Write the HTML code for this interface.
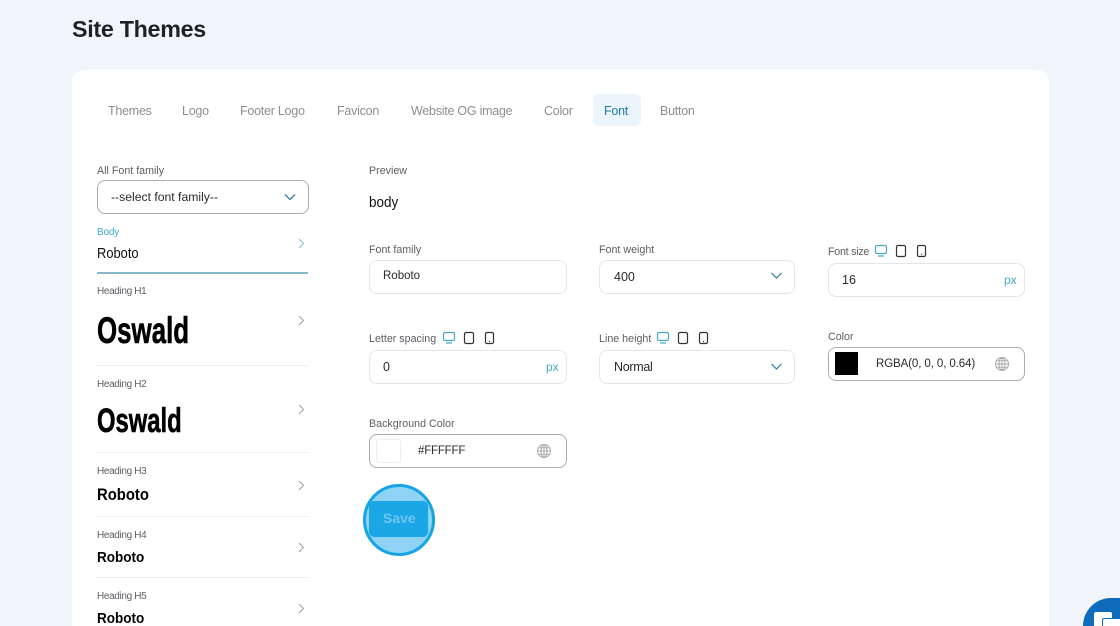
<!DOCTYPE html>
<html><head><meta charset="utf-8">
<style>
html,body{margin:0;padding:0;width:1120px;height:626px;overflow:hidden}
body{background:#f2f6fa;font-family:"Liberation Sans",sans-serif;color:#222}
#root{position:relative;width:1120px;height:626px;overflow:hidden;contain:paint}
.t{position:absolute;white-space:nowrap;line-height:1}
.card{position:absolute;left:72px;top:70px;width:977px;height:556px;background:#fff;border-radius:12px 12px 0 0}
.tab{font-size:12.5px;letter-spacing:-.25px;color:#8b8f93;top:105px}
.lab{font-size:10.7px;color:#5c6064}
.hd{font-size:10px;letter-spacing:-.35px;color:#5c6064}
.box{position:absolute;box-sizing:border-box;background:#fff;border:1px solid #e3e6e9;border-radius:8px}
.dark{border:1px solid #a9acaf}
.val{font-size:12.5px;color:#2a2a2a}
.line{position:absolute;left:97px;width:211px;height:1px;background:#ececec}
.r{font-weight:700;color:#000;transform-origin:0 0;transform:scaleX(.9)}
.osw{font-family:"Liberation Sans Narrow","Liberation Sans",sans-serif;font-weight:700;color:#000;transform-origin:0 0;-webkit-text-stroke:.6px #000}
svg{position:absolute;overflow:visible}
</style></head><body><div id="root">
<div class="t" style="left:72px;top:18px;font-size:23.3px;font-weight:700;color:#1d2226;letter-spacing:-.3px">Site Themes</div>
<div class="card"></div>

<div style="position:absolute;left:593px;top:94px;width:48px;height:32px;background:#ecf5fb;border-radius:6px"></div>
<div class="t tab" style="left:108px">Themes</div>
<div class="t tab" style="left:182px">Logo</div>
<div class="t tab" style="left:240px">Footer Logo</div>
<div class="t tab" style="left:337px">Favicon</div>
<div class="t tab" style="left:411px">Website OG image</div>
<div class="t tab" style="left:544px">Color</div>
<div class="t tab" style="left:604px;color:#1b7ba8">Font</div>
<div class="t tab" style="left:660px">Button</div>

<div class="t lab" style="left:97px;top:166px">All Font family</div>
<div class="box dark" style="left:97px;top:180px;width:212px;height:34px"></div>
<div class="t val" style="left:111px;top:191px;font-size:12.2px">--select font family--</div>
<svg style="left:284px;top:193px" width="12" height="8" fill="none" stroke="#2b7c9f" stroke-width="1.3"><path d="M1 1.5L6 6.5L11 1.5"/></svg>

<div class="t" style="left:97px;top:228px;font-size:10px;letter-spacing:-.2px;color:#3fa9cc">Body</div>
<div class="t" style="left:97px;top:247px;font-size:14.5px;color:#111;transform-origin:0 0;transform:scaleX(.89)">Roboto</div>
<svg style="left:298px;top:238px" width="6" height="11" fill="none" stroke="#7fb6cc" stroke-width=".9"><path d="M1 1L5.5 5.5L1 10"/></svg>
<div class="line" style="top:272px;height:2px;background:#87b9cb"></div>

<div class="t hd" style="left:97px;top:287px">Heading H1</div>
<div class="t osw" style="left:97px;top:312px;font-size:37px;transform:scaleX(.7)">Oswald</div>
<svg style="left:298px;top:315px" width="6" height="11" fill="none" stroke="#999" stroke-width=".9"><path d="M1 1L5.5 5.5L1 10"/></svg>
<div class="line" style="top:365px"></div>

<div class="t hd" style="left:97px;top:380px">Heading H2</div>
<div class="t osw" style="left:97px;top:404px;font-size:34px;transform:scaleX(.7)">Oswald</div>
<svg style="left:298px;top:404px" width="6" height="11" fill="none" stroke="#999" stroke-width=".9"><path d="M1 1L5.5 5.5L1 10"/></svg>
<div class="line" style="top:452px"></div>

<div class="t hd" style="left:97px;top:467px">Heading H3</div>
<div class="t r" style="left:97px;top:487px;font-size:16.5px">Roboto</div>
<svg style="left:298px;top:480px" width="6" height="11" fill="none" stroke="#999" stroke-width=".9"><path d="M1 1L5.5 5.5L1 10"/></svg>
<div class="line" style="top:516px"></div>

<div class="t hd" style="left:97px;top:531px">Heading H4</div>
<div class="t r" style="left:97px;top:550px;font-size:15px">Roboto</div>
<svg style="left:298px;top:542px" width="6" height="11" fill="none" stroke="#999" stroke-width=".9"><path d="M1 1L5.5 5.5L1 10"/></svg>
<div class="line" style="top:577px"></div>

<div class="t hd" style="left:97px;top:592px">Heading H5</div>
<div class="t r" style="left:97px;top:611px;font-size:15px">Roboto</div>
<svg style="left:298px;top:603px" width="6" height="11" fill="none" stroke="#999" stroke-width=".9"><path d="M1 1L5.5 5.5L1 10"/></svg>

<div class="t lab" style="left:369px;top:166px">Preview</div>
<div class="t" style="left:369px;top:196px;font-size:14.5px;color:#111;transform-origin:0 0;transform:scaleX(.93)">body</div>

<div class="t lab" style="left:369px;top:245px">Font family</div>
<div class="box" style="left:369px;top:260px;width:198px;height:34px"></div>
<div class="t val" style="left:383px;top:271px;font-size:11.5px">Roboto</div>

<div class="t lab" style="left:599px;top:245px">Font weight</div>
<div class="box" style="left:599px;top:260px;width:196px;height:34px"></div>
<div class="t val" style="left:614px;top:271px">400</div>
<svg style="left:771px;top:272px" width="11" height="8" fill="none" stroke="#2b7c9f" stroke-width="1.2"><path d="M.5 1L5.5 6L10.500 1"/></svg>

<div class="t lab" style="left:828px;top:247px;letter-spacing:-.25px">Font size</div>
<svg style="left:875px;top:245px" width="12" height="12" fill="none" stroke="#45a7c7" stroke-width="1.2"><rect x=".5" y=".5" width="11" height="8" rx="1.500"/><path d="M3 11h6"/></svg>
<svg style="left:896px;top:245px" width="11" height="12" fill="none" stroke="#333" stroke-width="1.2"><rect x=".5" y=".5" width="9" height="11" rx="1.500"/></svg>
<svg style="left:917px;top:245px" width="9" height="12" fill="none" stroke="#333" stroke-width="1.2"><rect x=".5" y=".5" width="8" height="11" rx="1.500"/><path d="M4 9.500h1"/></svg>
<div class="box" style="left:828px;top:263px;width:197px;height:34px"></div>
<div class="t val" style="left:842px;top:274px">16</div>
<div class="t" style="left:1004px;top:274px;font-size:12px;color:#4ba8c7">px</div>

<div class="t lab" style="left:369px;top:334px">Letter spacing</div>
<svg style="left:443px;top:332px" width="12" height="12" fill="none" stroke="#45a7c7" stroke-width="1.2"><rect x=".5" y=".5" width="11" height="8" rx="1.500"/><path d="M3 11h6"/></svg>
<svg style="left:464px;top:332px" width="11" height="12" fill="none" stroke="#333" stroke-width="1.2"><rect x=".5" y=".5" width="9" height="11" rx="1.500"/></svg>
<svg style="left:485px;top:332px" width="9" height="12" fill="none" stroke="#333" stroke-width="1.2"><rect x=".5" y=".5" width="8" height="11" rx="1.500"/><path d="M4 9.500h1"/></svg>
<div class="box" style="left:369px;top:350px;width:198px;height:34px"></div>
<div class="t val" style="left:383px;top:361px">0</div>
<div class="t" style="left:546px;top:361px;font-size:12px;color:#4ba8c7">px</div>

<div class="t lab" style="left:599px;top:334px">Line height</div>
<svg style="left:657px;top:332px" width="12" height="12" fill="none" stroke="#45a7c7" stroke-width="1.2"><rect x=".5" y=".5" width="11" height="8" rx="1.500"/><path d="M3 11h6"/></svg>
<svg style="left:678px;top:332px" width="11" height="12" fill="none" stroke="#333" stroke-width="1.2"><rect x=".5" y=".5" width="9" height="11" rx="1.500"/></svg>
<svg style="left:699px;top:332px" width="9" height="12" fill="none" stroke="#333" stroke-width="1.2"><rect x=".5" y=".5" width="8" height="11" rx="1.500"/><path d="M4 9.500h1"/></svg>
<div class="box" style="left:599px;top:350px;width:196px;height:34px"></div>
<div class="t val" style="left:614px;top:361px;letter-spacing:-.3px">Normal</div>
<svg style="left:771px;top:363px" width="11" height="8" fill="none" stroke="#2b7c9f" stroke-width="1.2"><path d="M.5 1L5.5 6L10.500 1"/></svg>

<div class="t lab" style="left:828px;top:332px">Color</div>
<div class="box dark" style="left:828px;top:347px;width:197px;height:34px"></div>
<div style="position:absolute;left:835px;top:352px;width:23px;height:23px;background:#000"></div>
<div class="t val" style="left:876px;top:359px;font-size:11.5px;letter-spacing:-.1px">RGBA(0, 0, 0, 0.64)</div>
<svg style="left:995px;top:357px" width="14" height="14" fill="none" stroke="#a5a5a5" stroke-width=".9"><circle cx="7" cy="7" r="6.500"/><ellipse cx="7" cy="7" rx="3" ry="6.500"/><path d="M7 .5v13M.5 7h13M1.500 3.800h11M1.500 10.200h11"/></svg>

<div class="t lab" style="left:369px;top:419px">Background Color</div>
<div class="box dark" style="left:369px;top:434px;width:198px;height:34px"></div>
<div class="box" style="left:376px;top:439px;width:25px;height:24px;border-radius:3px;border-color:#eee"></div>
<div class="t val" style="left:418px;top:446px;font-size:11.5px;letter-spacing:-.2px">#FFFFFF</div>
<svg style="left:537px;top:444px" width="14" height="14" fill="none" stroke="#a5a5a5" stroke-width=".9"><circle cx="7" cy="7" r="6.500"/><ellipse cx="7" cy="7" rx="3" ry="6.500"/><path d="M7 .5v13M.5 7h13M1.500 3.800h11M1.500 10.200h11"/></svg>

<div style="position:absolute;left:363px;top:484px;width:72px;height:72px;box-sizing:border-box;border-radius:50%;background:#8fd3f4;border:3px solid #17a4e6"></div>
<div style="position:absolute;left:369px;top:501px;width:59px;height:36px;border-radius:5px;background:#1ba6e6"></div>
<div class="t" style="left:383px;top:511px;font-size:14px;font-weight:700;color:#72c5ee">Save</div>

<div style="position:absolute;left:1083px;top:598px;width:37px;height:28px;background:#0f6cbd;border-radius:30px 0 0 0"></div>
<div style="position:absolute;left:1094px;top:612px;width:18px;height:14px;background:#fff;border-radius:2px 2px 0 0"></div>
<div style="position:absolute;left:1102px;top:618px;width:18px;height:8px;box-sizing:border-box;background:#fff;border:1px solid #0f6cbd;border-right:0;border-bottom:0;border-radius:2px 0 0 0"></div>
</div></body></html>
